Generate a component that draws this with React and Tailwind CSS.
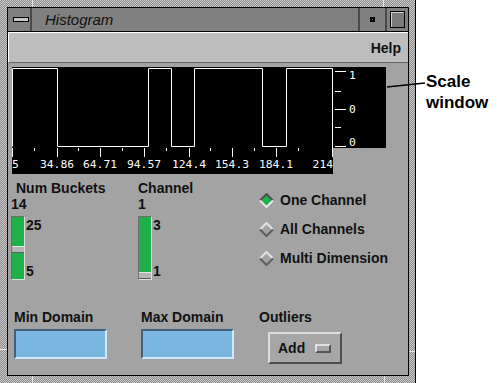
import React from "react";

const longTicks = [12, 57, 100, 144, 189, 232, 276, 332];
const shortTicks = [34, 78, 122, 166, 210, 254, 298];
const labels = [
  { t: "5", x: 0, a: "start" },
  { t: "34.86", x: 45, a: "middle" },
  { t: "64.71", x: 88, a: "middle" },
  { t: "94.57", x: 132, a: "middle" },
  { t: "124.4", x: 177, a: "middle" },
  { t: "154.3", x: 220, a: "middle" },
  { t: "184.1", x: 264, a: "middle" },
  { t: "214", x: 321, a: "end" },
];

function Chart() {
  const mono = "'DejaVu Sans Mono', monospace";
  return (
    <svg width="374" height="107" className="block font-normal">
      <rect x="0" y="0" width="321" height="107" fill="#000" />
      <rect x="321" y="0" width="53" height="81" fill="#000" />
      <path
        d="M0.5 79.5 V1.5 H45.5 V79.5 H136.5 V1.5 H159.5 V79.5 H182.5 V1.5 H250.5 V79.5 H274.5 V1.5 H320.5 V81"
        fill="none"
        stroke="#fff"
        strokeWidth="1"
      />
      {longTicks.map((x) => (
        <line key={"l" + x} x1={x - 12 + 0.5} x2={x - 12 + 0.5} y1="81" y2="90" stroke="#fff" />
      ))}
      {shortTicks.map((x) => (
        <line key={"s" + x} x1={x - 12 + 0.5} x2={x - 12 + 0.5} y1="81" y2="84" stroke="#fff" />
      ))}
      {labels.map((l) => (
        <text key={l.t} x={l.x} y="101" fill="#fff" fontFamily={mono} fontWeight="normal" fontSize="11.3" textAnchor={l.a}>
          {l.t}
        </text>
      ))}
      {/* scale window */}
      <line x1="323" x2="334" y1="4.5" y2="4.5" stroke="#fff" />
      <line x1="323" x2="329" y1="24.5" y2="24.5" stroke="#fff" />
      <line x1="323" x2="334" y1="42.5" y2="42.5" stroke="#fff" />
      <line x1="323" x2="329" y1="60.5" y2="60.5" stroke="#fff" />
      <line x1="323" x2="334" y1="79.5" y2="79.5" stroke="#fff" />
      <text x="337" y="12" fill="#fff" fontFamily={mono} fontWeight="normal" fontSize="11.3">1</text>
      <text x="337" y="46" fill="#fff" fontFamily={mono} fontWeight="normal" fontSize="11.3">0</text>
      <text x="337" y="79" fill="#fff" fontFamily={mono} fontWeight="normal" fontSize="11.3">0</text>
    </svg>
  );
}

function Slider({ top, bottom, hi, lo }) {
  return (
    <div className="flex mt-[4px]">
      <div className="w-[14px] h-[64px] flex flex-col border border-t-[#6e6e6e] border-l-[#6e6e6e] border-b-[#dedede] border-r-[#dedede]">
        <div className="bg-[#20b04b]" style={{ height: top }} />
        <div className="h-[7px] bg-[#b4b4b4] border-t border-t-[#e2e2e2] border-b border-b-[#5a5a5a]" />
        <div className="bg-[#20b04b]" style={{ height: bottom }} />
      </div>
      <div className="h-[62px] mt-[1px] ml-[1px] flex flex-col justify-between">
        <span>{hi}</span>
        <span>{lo}</span>
      </div>
    </div>
  );
}

function Diamond({ on }) {
  return (
    <svg width="15" height="15" className="block">
      <polygon points="7.5,1 14,7.5 7.5,14 1,7.5" fill={on ? "#1fb04a" : "#a3a3a3"} />
      <polyline points="1,7.5 7.5,1 14,7.5" fill="none" stroke={on ? "#4e4e4e" : "#e4e4e4"} strokeWidth="2" />
      <polyline points="1,7.5 7.5,14 14,7.5" fill="none" stroke={on ? "#e6e6e6" : "#5c5c5c"} strokeWidth="2" />
    </svg>
  );
}

function Field() {
  return (
    <div className="mt-[4px] w-[93px] h-[30px] bg-[#7ab6e0] border-2 border-t-[#3f6078] border-l-[#3f6078] border-b-[#cfe9fb] border-r-[#cfe9fb]" />
  );
}

export default function App() {
  return (
    <div className="relative w-[500px] h-[383px] bg-white overflow-hidden font-['Liberation_Sans',Arial,sans-serif] text-[#111]">
      <div className="w-[416px] h-[383px] border-r border-black bg-[repeating-conic-gradient(#8a8a8a_0%_25%,#cbcbcb_0%_50%)] bg-[length:2px_2px] pt-[7px] pl-[7px]">
        <div className="w-[402px] h-[369px] border border-black flex flex-col bg-[#a3a3a3]">
          {/* title bar */}
          <div className="h-[24px] flex bg-[#808080] border-b border-black shrink-0">
            <div className="w-[24px] shrink-0 flex items-center pl-[5px] border-r-2 border-[#4a4a4a]">
              <div className="w-[16px] h-[5px] border border-black bg-[#c6c6c6]" />
            </div>
            <div className="flex-1 pl-[13px] flex items-center text-[15px] italic leading-[16px] text-[#111]">
              Histogram
            </div>
            <div className="w-[29px] shrink-0 flex items-center justify-center border-l-2 border-r-2 border-[#4a4a4a]">
              <div className="w-[5px] h-[5px] border-2 border-black bg-[#9a9a9a]" />
            </div>
            <div className="w-[21px] shrink-0 flex items-center justify-center">
              <div className="w-[15px] h-[17px] border border-black bg-[#7a7a7a] shadow-[inset_1px_1px_0_#cfcfcf]" />
            </div>
          </div>
          {/* menu bar */}
          <div className="h-[31px] shrink-0 flex items-center justify-end pr-[7px] bg-[#bdbdbd] border-t border-l border-white border-b border-b-[#666]">
            <span className="text-[14px] font-bold leading-[16px]">Help</span>
          </div>
          {/* body */}
          <div className="flex-1 flex flex-col text-[14px] font-bold leading-[16px]">
            <div className="mt-[4px] ml-[4px]">
              <Chart />
            </div>
            <div className="flex mt-[6px]">
              <div className="ml-[3px] w-[127px] flex flex-col">
                <span className="ml-[5px]">Num Buckets</span>
                <span>14</span>
                <Slider top={29} bottom={26} hi="25" lo="5" />
              </div>
              <div className="w-[121px] flex flex-col">
                <span>Channel</span>
                <span>1</span>
                <Slider top={55} bottom={0} hi="3" lo="1" />
              </div>
              <div className="flex flex-col pt-[12px] gap-[13px]">
                <div className="flex items-center h-[16px] gap-[6px]">
                  <Diamond on />
                  <span>One Channel</span>
                </div>
                <div className="flex items-center h-[16px] gap-[6px]">
                  <Diamond />
                  <span>All Channels</span>
                </div>
                <div className="flex items-center h-[16px] gap-[6px]">
                  <Diamond />
                  <span>Multi Dimension</span>
                </div>
              </div>
            </div>
            <div className="flex mt-[29px]">
              <div className="ml-[6px] w-[127px] flex flex-col">
                <span>Min Domain</span>
                <Field />
              </div>
              <div className="w-[118px] flex flex-col">
                <span>Max Domain</span>
                <Field />
              </div>
              <div className="flex flex-col">
                <span>Outliers</span>
                <div className="mt-[7px] ml-[9px] w-[74px] h-[32px] flex items-center pl-[8px] bg-[#a6a6a6] border-2 border-t-[#dcdcdc] border-l-[#dcdcdc] border-b-[#4d4d4d] border-r-[#4d4d4d]">
                  <span>Add</span>
                  <div className="ml-[10px] w-[16px] h-[9px] bg-[#a6a6a6] border-2 border-t-[#e0e0e0] border-l-[#e0e0e0] border-b-[#555] border-r-[#555]" />
                </div>
              </div>
            </div>
          </div>
        </div>
      </div>

      {/* frame corner notches */}
      <div className="absolute left-[32px] top-0 w-px h-[7px] bg-[#e6e6e6]" />
      <div className="absolute left-[383px] top-0 w-px h-[7px] bg-[#e6e6e6]" />
      <div className="absolute left-[32px] top-[376px] w-px h-[7px] bg-[#e6e6e6]" />
      <div className="absolute left-[384px] top-[376px] w-px h-[7px] bg-[#e6e6e6]" />
      <div className="absolute left-0 top-[349px] w-[7px] h-px bg-[#e6e6e6]" />
      <div className="absolute left-[409px] top-[351px] w-[6px] h-px bg-[#e6e6e6]" />

      {/* annotation */}
      <svg className="absolute left-[380px] top-[78px]" width="50" height="14">
        <line x1="7" y1="9" x2="45" y2="5" stroke="#000" strokeWidth="1.5" />
      </svg>
      <div className="absolute left-[426px] top-[71px] text-[17px] leading-[21px] font-bold text-black">
        Scale
        <br />
        window
      </div>
    </div>
  );
}
